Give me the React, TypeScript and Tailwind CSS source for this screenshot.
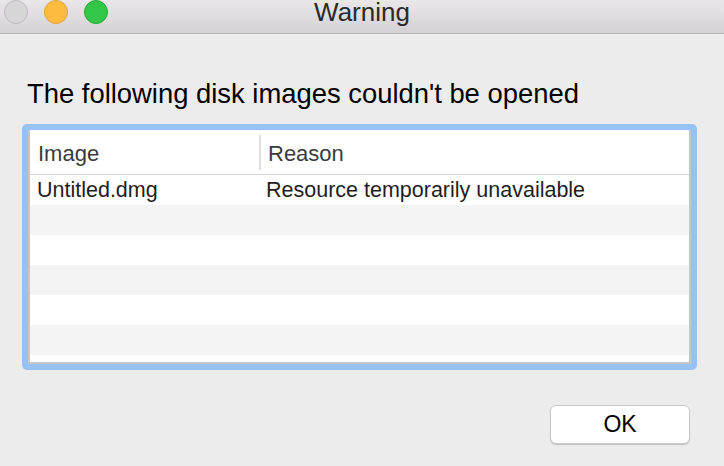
import React from 'react'

const rows = [
  { image: 'Untitled.dmg', reason: 'Resource temporarily unavailable' },
  { image: '', reason: '' },
  { image: '', reason: '' },
  { image: '', reason: '' },
  { image: '', reason: '' },
  { image: '', reason: '' },
]

export default function App() {
  return (
    <div className="w-[724px] h-[466px] bg-[#ececec] flex flex-col overflow-hidden font-['Liberation_Sans',Arial,sans-serif] text-[#1e1e1e]">
      {/* Title bar */}
      <div className="relative h-[34px] shrink-0 bg-gradient-to-b from-[#e9e7e9] to-[#d4d2d4] border-b border-[#b4b4b4] flex justify-center">
        <div className="absolute left-[4px] top-0 flex gap-[16px]">
          <span className="w-[24px] h-[24px] rounded-full bg-[#d6d6d6] border border-[#bdbdbd]" />
          <span className="w-[24px] h-[24px] rounded-full bg-[#fdbc40] border border-[#dea236]" />
          <span className="w-[24px] h-[24px] rounded-full bg-[#33c748] border border-[#27aa35]" />
        </div>
        <span className="text-[26px] leading-[25px] text-[#2a2a2a]">Warning</span>
      </div>

      {/* Message */}
      <div className="pl-[27px] pt-[44px] text-[27.4px] leading-[31px] text-black">
        The following disk images couldn't be opened
      </div>

      {/* Table with focus ring */}
      <div className="mt-[15px] ml-[22px] w-[675px] h-[246px] rounded-[5px] border-[6px] border-[#95c2f3] bg-[#95c2f3]">
        <div className="h-full border-x-2 border-b-2 border-[#c6c6c6] bg-white flex flex-col">
          <div className="h-[45px] shrink-0 flex items-center pt-[3px] border-b border-[#d6d6d6] text-[22px] text-[#3b3b3b]">
            <div className="w-[229px] pl-[8px]">Image</div>
            <div className="h-[35px] w-[2px] mt-[-3px] bg-[#dedede]" />
            <div className="pl-[7px]">Reason</div>
          </div>
          {rows.map((r, i) => (
            <div
              key={i}
              className={`h-[30px] shrink-0 flex items-center text-[21.5px] ${i % 2 === 1 ? 'bg-[#f4f4f4]' : 'bg-white'}`}
            >
              <div className="w-[229px] pl-[7px]">{r.image}</div>
              <div className="pl-[7px]">{r.reason}</div>
            </div>
          ))}
        </div>
      </div>

      {/* Buttons */}
      <div className="flex justify-end pr-[34px] mt-[35px]">
        <button className="w-[140px] h-[39px] rounded-[6px] bg-white border border-[#c8c8c8] shadow-[0_1px_1px_rgba(0,0,0,0.18)] text-[23px] text-black">
          OK
        </button>
      </div>
    </div>
  )
}
